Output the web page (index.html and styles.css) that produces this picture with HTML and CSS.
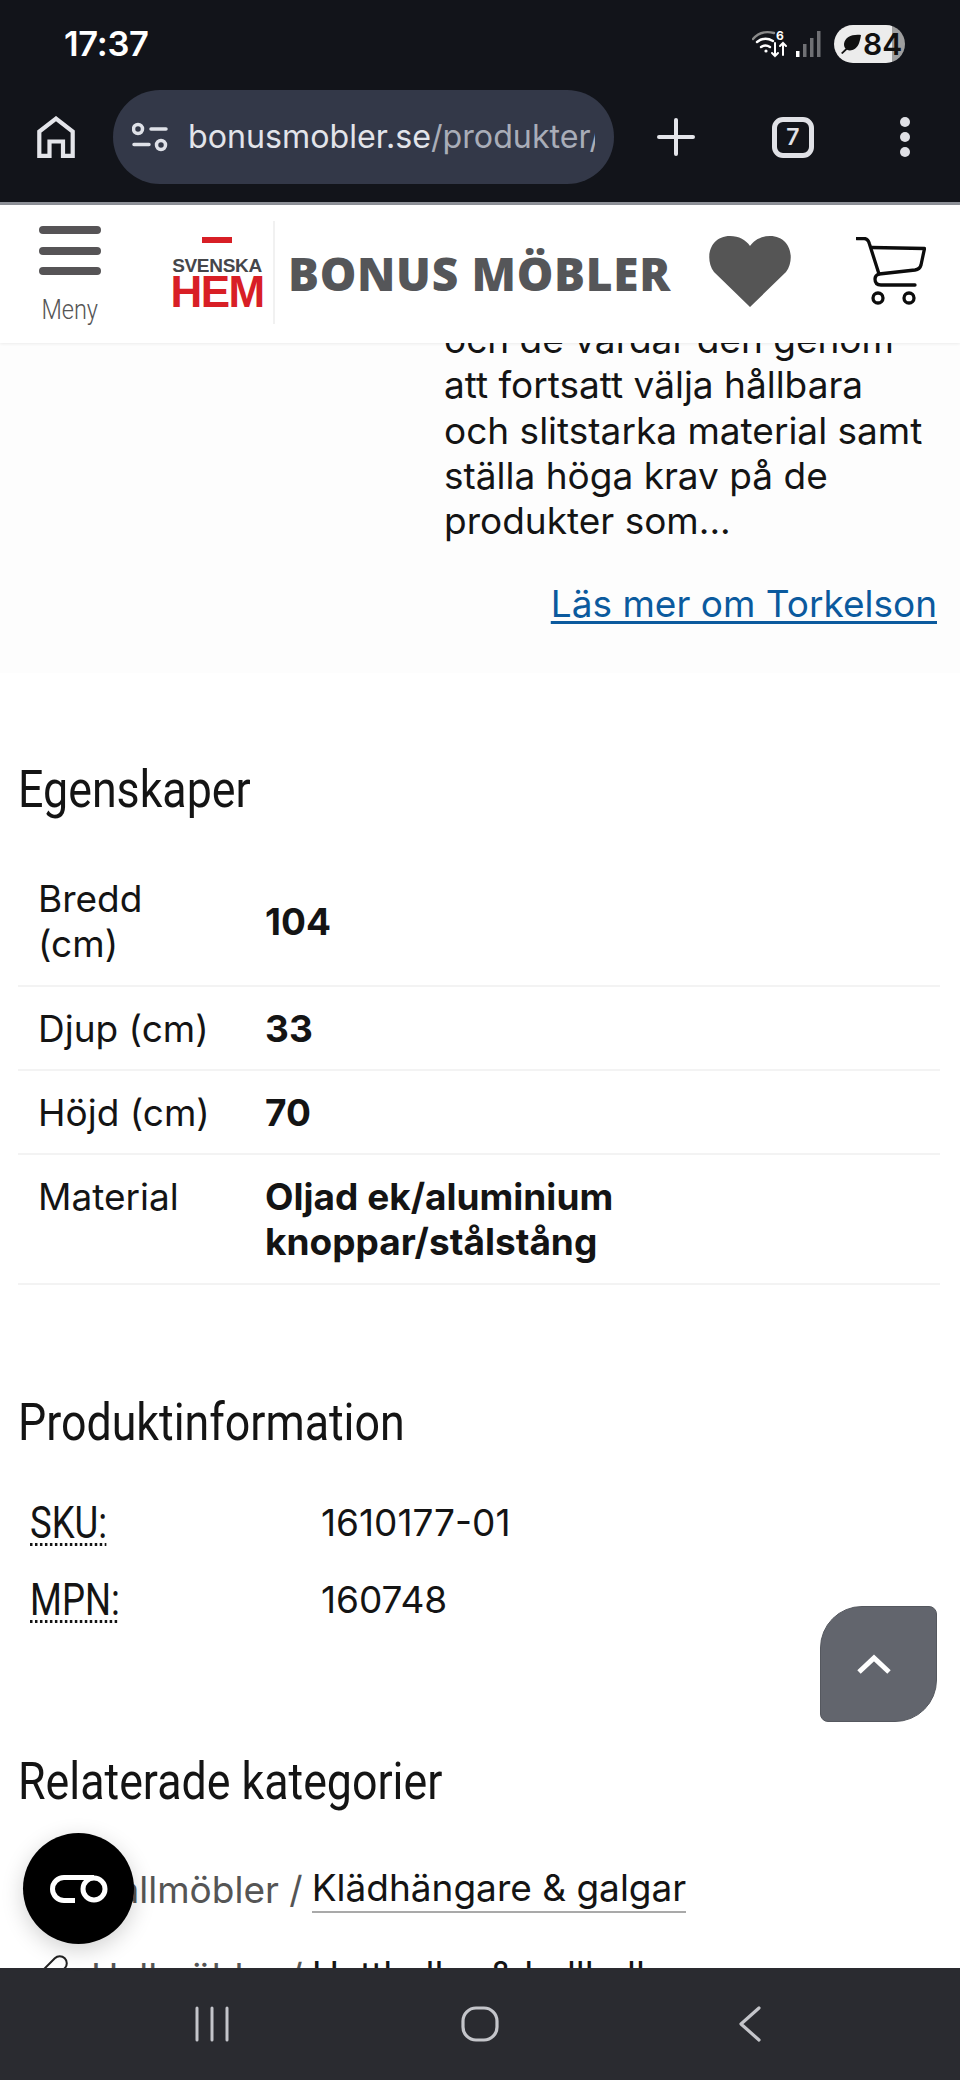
FILE: index.html
```html
<!DOCTYPE html>
<html lang="sv">
<head>
<meta charset="utf-8">
<title>Bonus Möbler</title>
<link rel="stylesheet" href="styles.css">
</head>
<body>
<div class="screen">
  <div class="chrome">
    <div class="status">
      <span class="time">17:37</span>
      <div class="status-right">
        <svg class="wifi" viewBox="0 0 36 28" fill="none" stroke="#fff" stroke-linecap="round">
          <path d="M1 9C6 3 14 1 22 3" stroke="#8a8a8a" stroke-width="2.4"/>
          <path d="M5 12c5-4 11-4 16-1" stroke-width="2.4"/>
          <path d="M9 17c3-2 6-2 9 0" stroke-width="2.4"/>
          <circle cx="14" cy="21" r="1.6" fill="#fff" stroke="none"/>
          <path d="M23 13v13M20 23l3 3 3-3M31 25V13M28 16l3-3 3 3" stroke-width="2"/>
          <text x="24" y="10" class="wifi-six">6</text>
        </svg>
        <svg class="signal" viewBox="0 0 25 26">
          <rect x="0" y="20" width="3.5" height="6" fill="#fff"/>
          <rect x="7" y="13" width="3.5" height="13" fill="#6f7074"/>
          <rect x="14" y="7" width="3.5" height="19" fill="#6f7074"/>
          <rect x="21" y="0" width="3.5" height="26" fill="#6f7074"/>
        </svg>
        <div class="battery">
          <svg class="leaf" viewBox="0 0 22 20"><path d="M21 1C12 0 5 3 4 10c0 2 .6 3.5 1.6 4.500L1 19l1.500 1L7 15.800c2 1 5 1 8-1 4-3 5-8 6-13.800z"/></svg>
          <span>84</span>
        </div>
      </div>
    </div>
    <div class="toolbar">
      <svg class="home" viewBox="0 0 38 42" fill="none" stroke="#e4e5ea" stroke-width="4.200"><path d="M2.300 39.800V15.500L19 2.600l16.700 12.900v24.300H26V25.500H12.500v14.300z"/></svg>
      <div class="urlbar">
        <svg class="tune" viewBox="0 0 36 30" fill="none" stroke="#dfe1e8" stroke-width="3.500"><circle cx="6" cy="7" r="4.500"/><path d="M19 7h15M2 22.500h15" stroke-linecap="round"/><circle cx="29" cy="23" r="4.500"/></svg>
        <div class="url"><span class="url-host">bonusmobler.se</span><span class="url-path">/produkter/torkelson</span></div>
      </div>
      <svg class="plus" viewBox="0 0 38 38" stroke="#e4e5ea" stroke-width="4" stroke-linecap="round"><path d="M19 2v34M2 19h34"/></svg>
      <div class="tabs">7</div>
      <div class="dots"><i></i><i></i><i></i></div>
    </div>
  </div>

  <header class="site-header">
    <div class="menu">
      <div class="burger"><i></i><i></i><i></i></div>
      <span class="menu-label">Meny</span>
    </div>
    <div class="logo-mark">
      <i class="logo-dash"></i>
      <span class="logo-svenska">SVENSKA</span>
      <span class="logo-hem">HEM</span>
    </div>
    <span class="brand">BONUS MÖBLER</span>
    <svg class="heart" viewBox="0 0 82 71"><path fill="#555" d="M41 71L5 36C-5 22 1 0 21 0c9 0 16 4 20 10 4-6 11-10 20-10 20 0 26 22 16 36z"/></svg>
    <svg class="cart" viewBox="0 0 70 68" fill="none" stroke="#0c0c0c" stroke-width="3.300" stroke-linecap="round" stroke-linejoin="round"><path d="M1 1.500h7c3 0 4.500 2 5.300 5L23 37"/><path d="M15.500 10.500L68.500 11.500 65 28c-.8 3-3 4.500-6 5L23 37c-3 1-4 3-4 5 0 4 2.500 6 6 6h34"/><circle cx="22" cy="61" r="5"/><circle cx="53" cy="61" r="5"/></svg>
  </header>

  <main class="page">
    <section class="brand-box">
      <p class="brand-text">och de vårdar den genom att fortsatt välja hållbara och slitstarka material samt ställa höga krav på de produkter som...</p>
      <a class="brand-link" href="#">Läs mer om Torkelson</a>
    </section>

    <section class="props">
      <h2 class="heading">Egenskaper</h2>
      <table class="prop-table">
        <tr><td class="prop-name">Bredd (cm)</td><td class="prop-val">104</td></tr>
        <tr><td class="prop-name">Djup (cm)</td><td class="prop-val">33</td></tr>
        <tr><td class="prop-name">Höjd (cm)</td><td class="prop-val">70</td></tr>
        <tr><td class="prop-name">Material</td><td class="prop-val">Oljad ek/aluminium<br>knoppar/stålstång</td></tr>
      </table>
    </section>

    <section class="info">
      <h2 class="heading">Produktinformation</h2>
      <dl class="info-list">
        <dt><abbr class="info-key">SKU:</abbr></dt><dd>1610177-01</dd>
        <dt><abbr class="info-key">MPN:</abbr></dt><dd>160748</dd>
      </dl>
    </section>

    <section class="related">
      <h2 class="heading">Relaterade kategorier</h2>
      <ul class="cat-list">
        <li><svg class="clip" viewBox="0 0 32 44" fill="none" stroke="#222" stroke-width="2"><rect x="9" y="-1" width="14" height="36" rx="7" transform="rotate(45 16 17)"/><path d="M6 22c3-4 8-5 11-2"/></svg><span class="cat-parent">Hallmöbler /</span> <a href="#">Klädhängare &amp; galgar</a></li>
        <li><svg class="clip" viewBox="0 0 32 44" fill="none" stroke="#222" stroke-width="2"><rect x="9" y="-1" width="14" height="36" rx="7" transform="rotate(45 16 17)"/><path d="M6 22c3-4 8-5 11-2"/></svg><span class="cat-parent">Hallmöbler /</span> <a href="#">Hatthyllor &amp; hallhyllor</a></li>
      </ul>
    </section>
  </main>

  <nav class="navbar">
    <svg class="nav-recent" viewBox="0 0 34 36" stroke="#c4c5ca" stroke-width="3" stroke-linecap="round"><path d="M2 2v32M17 2v32M32 2v32"/></svg>
    <svg class="nav-home" viewBox="0 0 38 36" fill="none" stroke="#c4c5ca" stroke-width="3.200"><rect x="2" y="2" width="34" height="32" rx="13"/></svg>
    <svg class="nav-back" viewBox="0 0 24 36" fill="none" stroke="#c4c5ca" stroke-width="3.200" stroke-linecap="round" stroke-linejoin="round"><path d="M21 2L3 18l18 16"/></svg>
  </nav>

  <button class="to-top" type="button" aria-label="Till toppen">
    <svg viewBox="0 0 34 20" fill="none" stroke="#fff" stroke-width="5"><path d="M2 18L17 4l15 14"/></svg>
  </button>
  <button class="assist" type="button" aria-label="Assistent">
    <svg viewBox="0 0 58 28" fill="none" stroke="#fff" stroke-width="5"><path d="M25 25.500H14a11.500 11.500 0 0 1 0-23H44"/><circle cx="44" cy="14" r="11"/></svg>
  </button>
</div>
</body>
</html>
```

FILE: styles.css
```css
* { box-sizing: border-box; }
html, body { margin: 0; padding: 0; }
body { background: #fff; font-family: "Inter", "Liberation Sans", sans-serif; color: #141414; }
.screen { position: relative; width: 960px; height: 2080px; overflow: hidden; display: flex; flex-direction: column; }

/* browser chrome */
.chrome { flex: none; height: 205px; background: #12141a; border-bottom: 3px solid #8d9097; }
.status { height: 90px; display: flex; justify-content: space-between; align-items: center; padding: 0 55px 2px 64px; }
.time { font: 600 34.500px/1 "Inter", sans-serif; color: #fff; letter-spacing: -.3px; }
.status-right { display: flex; align-items: center; }
.wifi { width: 36px; height: 28px; margin-right: 8px; }
.wifi-six { font: 700 12px "Inter", sans-serif; fill: #fff; stroke: none; }
.signal { width: 25px; height: 26px; margin-right: 13px; }
.battery { width: 71px; height: 38px; border-radius: 19px; display: flex; align-items: center; padding-left: 6px; gap: 1px; background: linear-gradient(90deg, #ececec 0, #ececec 82%, #9f9f9f 82%); color: #111; font: 600 30px/1 "Inter", sans-serif; }
.leaf { width: 22px; height: 20px; fill: #111; flex: none; }
.toolbar { height: 94px; display: flex; align-items: center; padding-left: 37px; }
.home { width: 38px; height: 42px; margin-right: 38px; }
.urlbar { width: 501px; height: 94px; border-radius: 47px; background: #333848; display: flex; align-items: center; padding-left: 19px; margin-right: 43px; }
.tune { width: 36px; height: 30px; flex: none; margin-right: 20px; }
.url { width: 407px; overflow: hidden; white-space: nowrap; font: 400 32.200px/1.3 "Inter", sans-serif; }
.url-host { color: #e2e4ea; }
.url-path { color: #a9adb8; }
.plus { width: 38px; height: 38px; margin-right: 77px; }
.tabs { width: 42px; height: 41px; border: 5px solid #e0e1e6; border-radius: 11px; color: #e0e1e6; font: 600 23px/31px "Inter", sans-serif; text-align: center; margin-right: 86px; }
.dots { display: flex; flex-direction: column; gap: 5px; }
.dots i { display: block; width: 10px; height: 10px; border-radius: 50%; background: #dfe0e5; }

/* site header */
.site-header { flex: none; position: relative; z-index: 2; height: 138px; background: #fff; box-shadow: 0 1px 3px rgba(0,0,0,.07); display: flex; align-items: flex-start; }
.menu { width: 62px; margin: 21px 0 0 39px; display: flex; flex-direction: column; align-items: center; }
.burger { width: 62px; display: flex; flex-direction: column; gap: 12.500px; }
.burger i { display: block; height: 8px; border-radius: 4px; background: #565456; }
.menu-label { font: 300 28px/1 "Roboto", sans-serif; color: #555; margin-top: 21px; transform: scaleX(.84); }
.logo-mark { width: 100px; height: 103px; margin: 16px 0 0 74px; padding: 16px 14px 0 0; border-right: 2px solid #f1f1f1; display: flex; flex-direction: column; align-items: center; }
.logo-dash { display: block; width: 30px; height: 6px; background: #d81f26; margin-bottom: 15px; }
.logo-svenska { font: 700 19px/16px "Liberation Sans", sans-serif; color: #45464a; letter-spacing: -.3px; }
.logo-hem { font: 700 44px/34px "Liberation Sans", sans-serif; color: #d81f26; letter-spacing: -1.600px; margin-top: 1px; }
.brand { font: 800 46px/1 "Open Sans", sans-serif; color: #555659; margin: 45px 0 0 13px; white-space: nowrap; width: 381px; letter-spacing: .7px; }
.heart { width: 82px; height: 71px; margin: 31px 0 0 40px; }
.cart { width: 70px; height: 68px; margin: 32px 0 0 65px; }

/* page content */
.page { flex: 1; min-height: 0; overflow: hidden; background: #fff; }
.brand-box { background: #fdfdfd; margin-top: -26px; padding-left: 444px; padding-right: 23px; height: 356px; font-size: 37px; line-height: 45.300px; }
.brand-text { margin: 0; width: 492px; }
.brand-link { display: block; text-align: right; margin-top: 38px; color: #0b5a9e; text-decoration: underline; text-underline-offset: 4px; }
.heading { margin: 0; font: 400 52px/60px "Roboto", sans-serif; color: #141414; padding-left: 21px; transform: scaleX(.86); transform-origin: 0 50%; white-space: nowrap; }
.props { padding-top: 87px; }
.prop-table { margin: 37px 0 0 18px; width: 922px; border-collapse: collapse; font-size: 37px; line-height: 45.300px; }
.prop-table td { vertical-align: top; padding: 19px 0 18px; border-bottom: 2px solid #f3f3f3; }
.prop-name { width: 247px; padding-left: 20px !important; padding-right: 49px !important; }
.prop-val { font-weight: 700; }
.prop-table tr:first-child .prop-val { vertical-align: middle; }
.info { padding-top: 108px; }
.info-list { margin: 47px 0 0 30px; display: grid; grid-template-columns: 291px 1fr; row-gap: 29px; font-size: 37px; line-height: 46px; }
.info-list dt, .info-list dd { margin: 0; }
.info-key { display: inline-block; font: 400 44px/46px "Roboto", sans-serif; text-decoration: underline dotted #141414 3px; text-underline-offset: 5px; transform: scaleX(.83); transform-origin: 0 50%; }
.related { padding-top: 127px; }
.cat-list { list-style: none; margin: 34px 0 0 0; padding: 0 0 0 36px; font-size: 37px; line-height: 45px; }
.cat-list li { display: flex; align-items: center; white-space: nowrap; height: 87px; }
.clip { width: 32px; height: 44px; margin-right: 23px; flex: none; }
.cat-parent { color: #555; margin-right: 9px; }
.cat-list a { color: #141414; text-decoration: none; border-bottom: 2px solid #a9a9a9; line-height: 46px; }

/* android nav */
.navbar { flex: none; height: 112px; background: #2a2b30; display: flex; align-items: center; padding: 0 0 0 195px; }
.nav-recent { width: 34px; height: 36px; margin-right: 232px; }
.nav-home { width: 38px; height: 36px; margin-right: 239px; }
.nav-back { width: 24px; height: 36px; }

/* floating buttons */
.to-top { position: absolute; left: 820px; top: 1606px; width: 117px; height: 116px; padding: 0 9px 0 0; border: 1px solid #55585f; background: #62656d; border-radius: 42px 8px 42px 8px; display: flex; align-items: center; justify-content: center; }
.to-top svg { width: 34px; height: 20px; }
.assist { position: absolute; left: 23px; top: 1833px; width: 111px; height: 111px; padding: 0; border: 0; border-radius: 50%; background: #000; box-shadow: 0 6px 22px rgba(0,0,0,.18); display: flex; align-items: center; justify-content: center; }
.assist svg { width: 58px; height: 28px; }
```
